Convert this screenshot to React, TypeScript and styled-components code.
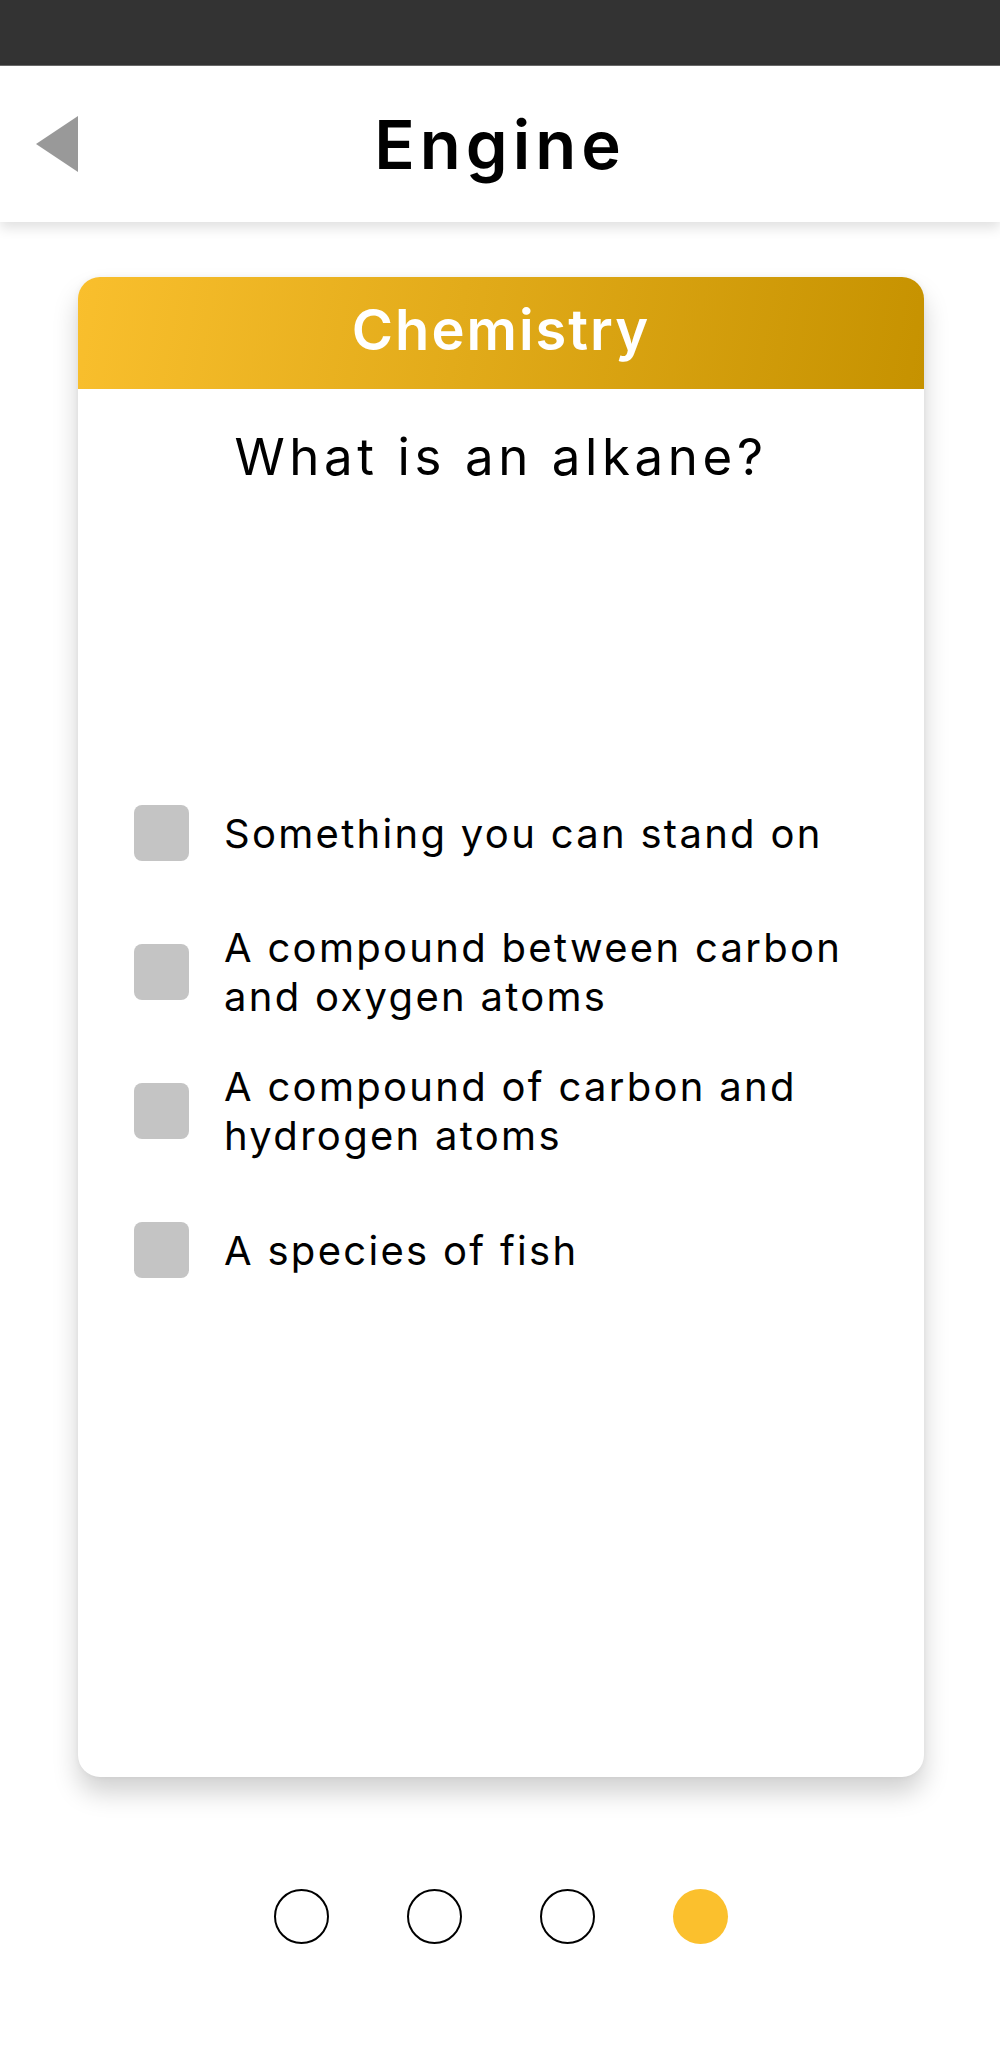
import React from "react";
import styled, { createGlobalStyle } from "styled-components";

const GlobalStyle = createGlobalStyle`
  html, body {
    margin: 0;
    padding: 0;
    background: #ffffff;
    font-family: Inter, "Noto Sans", sans-serif;
  }
  * { box-sizing: border-box; }
`;

const Page = styled.div`
  width: 1000px;
  min-height: 2056px;
  background: #ffffff;
  display: flex;
  flex-direction: column;
`;

const StatusBar = styled.div`
  height: 66px;
  background: #333333;
  border-bottom: 1px solid #6a6a6a;
`;

const Header = styled.header`
  position: relative;
  z-index: 1;
  height: 156px;
  background: #ffffff;
  display: grid;
  grid-template-columns: 120px 1fr 120px;
  align-items: center;
  box-shadow: 0 6px 12px rgba(0, 0, 0, 0.12);
`;

const BackButton = styled.button`
  border: none;
  background: none;
  padding: 0 0 0 36px;
  margin: 0;
  height: 56px;
  display: flex;
  align-items: center;
  cursor: pointer;
`;

const Title = styled.h1`
  margin: 0;
  text-align: center;
  font-family: Inter, sans-serif;
  font-weight: 600;
  font-size: 67px;
  letter-spacing: 5px;
  color: #000000;
`;

const Main = styled.main`
  display: flex;
  flex-direction: column;
  align-items: center;
  padding: 55px 0 0 2px;
`;

const Card = styled.section`
  width: 846px;
  height: 1500px;
  background: #ffffff;
  border-radius: 22px;
  overflow: hidden;
  box-shadow: 0 16px 26px rgba(0, 0, 0, 0.18), 0 0 6px rgba(0, 0, 0, 0.05);
  display: flex;
  flex-direction: column;
`;

const CardHeader = styled.div`
  height: 112px;
  background: linear-gradient(100deg, #f9bf2d 0%, #e2ab1a 45%, #c69200 100%);
  display: flex;
  align-items: center;
  justify-content: center;
`;

const Subject = styled.h2`
  margin: 0;
  font-family: Inter, sans-serif;
  font-weight: 600;
  font-size: 56px;
  letter-spacing: 2px;
  color: #ffffff;
  line-height: 1;
  padding-bottom: 6px;
`;

const Question = styled.p`
  margin: 37px 0 0;
  text-align: center;
  font-family: Inter, sans-serif;
  font-weight: 400;
  font-size: 51px;
  letter-spacing: 4.6px;
  line-height: 62px;
  color: #000000;
`;

const Options = styled.ul`
  list-style: none;
  margin: 295px 0 0;
  padding: 0 30px 0 56px;
  display: flex;
  flex-direction: column;
  gap: 39px;
`;

const Option = styled.li`
  min-height: 100px;
  display: flex;
  align-items: center;
  gap: 35px;
`;

const Box = styled.span<{ $checked?: boolean }>`
  flex: 0 0 55px;
  width: 55px;
  height: 56px;
  border-radius: 8px;
  background: ${(p) => (p.$checked ? "#f9bf2d" : "#c4c4c4")};
`;

const OptionText = styled.span`
  font-family: Inter, sans-serif;
  font-weight: 400;
  font-size: 40px;
  letter-spacing: 2.3px;
  line-height: 49px;
  color: #000000;
`;

const Dots = styled.nav`
  display: flex;
  justify-content: center;
  gap: 78px;
  margin-top: 112px;
`;

const Dot = styled.span<{ $active?: boolean }>`
  width: 55px;
  height: 55px;
  border-radius: 50%;
  background: ${(p) => (p.$active ? "#fbc02d" : "transparent")};
  border: ${(p) => (p.$active ? "none" : "2.5px solid #000000")};
`;

const options = [
  "Something you can stand on",
  "A compound between carbon and oxygen atoms",
  "A compound of carbon and hydrogen atoms",
  "A species of fish",
];

export default function App() {
  return (
    <Page>
      <GlobalStyle />
      <StatusBar />
      <Header>
        <BackButton aria-label="Back">
          <svg width="42" height="56" viewBox="0 0 42 56">
            <polygon points="42,0 42,56 0,28" fill="#999999" />
          </svg>
        </BackButton>
        <Title>Engine</Title>
        <div />
      </Header>
      <Main>
        <Card>
          <CardHeader>
            <Subject>Chemistry</Subject>
          </CardHeader>
          <Question>What is an alkane?</Question>
          <Options>
            {options.map((o) => (
              <Option key={o}>
                <Box />
                <OptionText>{o}</OptionText>
              </Option>
            ))}
          </Options>
        </Card>
        <Dots>
          <Dot />
          <Dot />
          <Dot />
          <Dot $active />
        </Dots>
      </Main>
    </Page>
  );
}
